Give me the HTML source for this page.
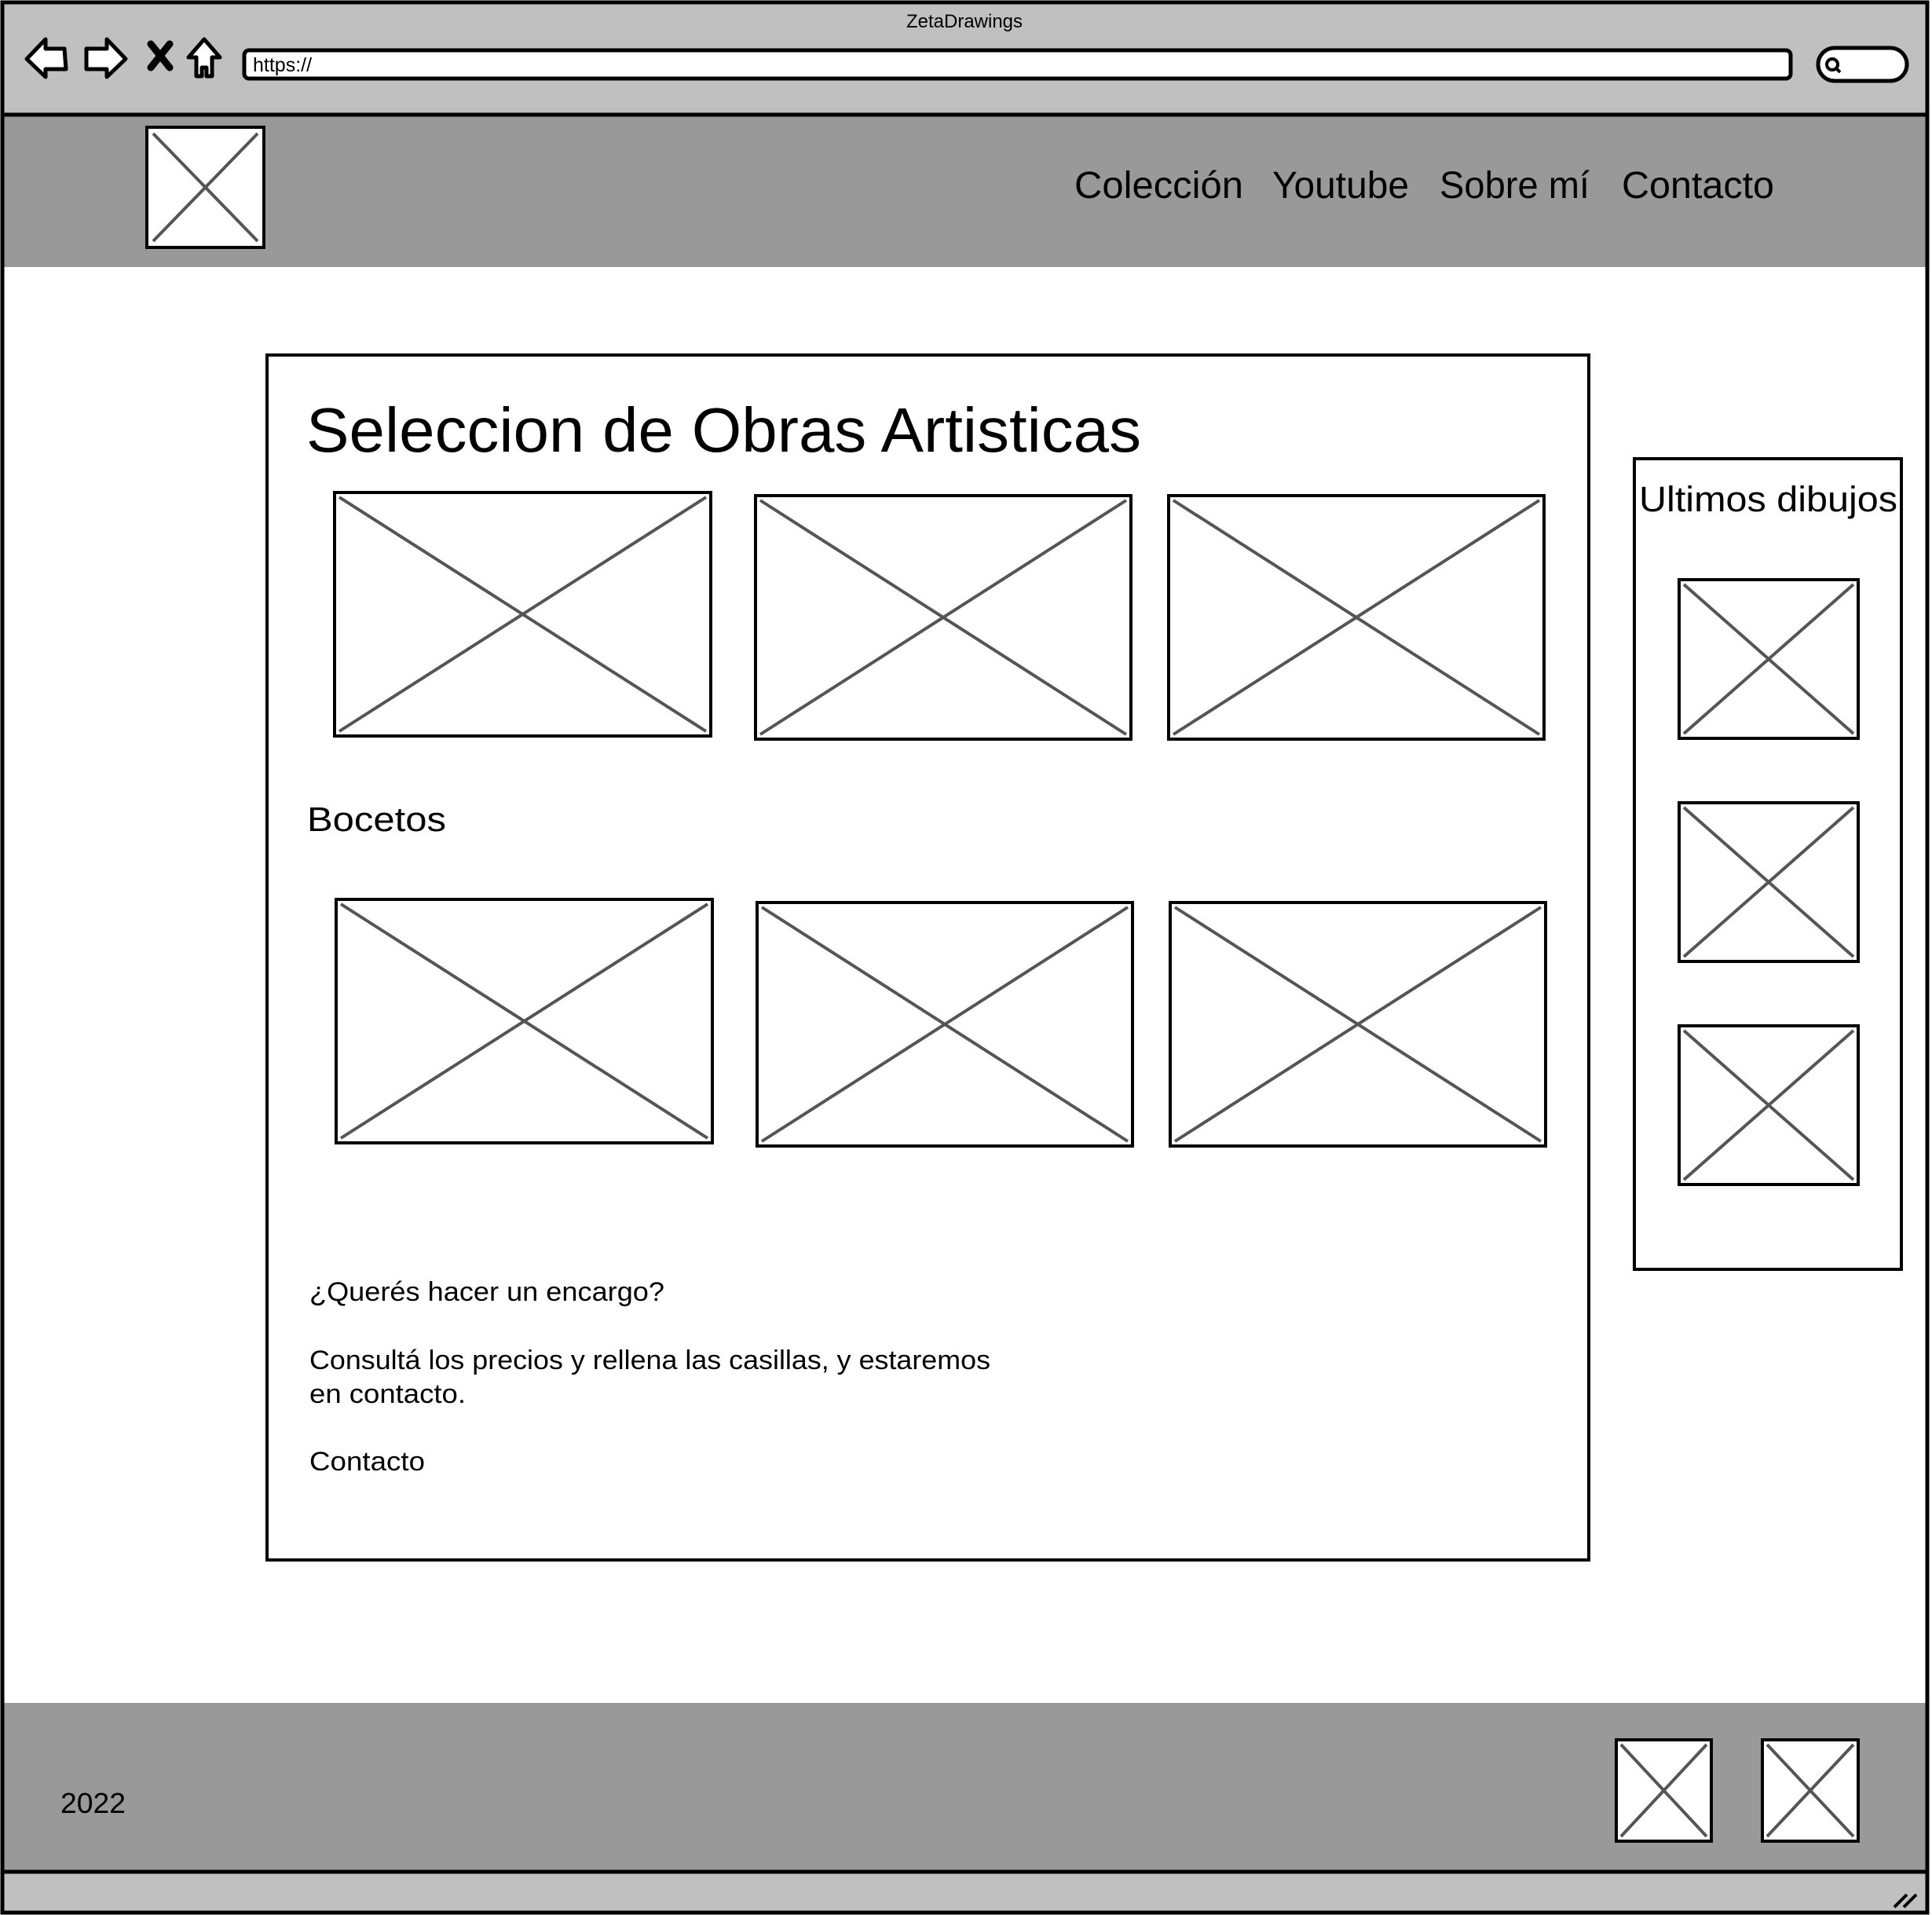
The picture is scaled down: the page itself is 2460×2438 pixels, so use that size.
<!DOCTYPE html>
<html><head><meta charset="utf-8"><style>
html,body{margin:0;padding:0;background:#fff;}
svg{display:block;}
text{font-family:"Liberation Sans",sans-serif;fill:#000;}
</style></head><body>
<svg width="2460" height="2438" viewBox="0 0 2460 2438" xmlns="http://www.w3.org/2000/svg">
<rect x="0" y="0" width="2460" height="2438" fill="#fff"/>
<rect x="4" y="4" width="2450" height="142" fill="#c0c0c0"/>
<text x="1228" y="35" font-size="24" text-anchor="middle">ZetaDrawings</text>
<path d="M34,75 L58,50 L58,62 L82,62 L84,88 L58,88 L58,98 Z" fill="#fff" stroke="#000" stroke-width="5" stroke-linejoin="round"/>
<path d="M160,75 L136,50 L136,62 L110,62 L110,88 L136,88 L136,98 Z" fill="#fff" stroke="#000" stroke-width="5" stroke-linejoin="round"/>
<path d="M192,56 L216,86 M216,56 L192,86" stroke="#000" stroke-width="9" stroke-linecap="round"/>
<path d="M260,50 L280,73 L270,73 L270,97 L263,97 L263,86 L257,86 L257,97 L250,97 L250,73 L240,73 Z" fill="#fff" stroke="#000" stroke-width="5" stroke-linejoin="round"/>
<rect x="311" y="64" width="1969" height="36" rx="6" fill="#fff" stroke="#000" stroke-width="5"/>
<text x="322" y="91" font-size="25">https://</text>
<rect x="2315" y="61" width="113" height="42" rx="21" fill="#fff" stroke="#000" stroke-width="5"/>
<circle cx="2333" cy="82" r="7" fill="none" stroke="#000" stroke-width="4"/>
<line x1="2338" y1="87" x2="2343" y2="92" stroke="#000" stroke-width="4"/>
<rect x="4" y="146" width="2450" height="194" fill="#999"/>
<line x1="4" y1="146" x2="2454" y2="146" stroke="#000" stroke-width="5"/>
<rect x="187" y="162" width="149" height="153" fill="#fff" stroke="#000" stroke-width="4"/>
<path d="M195,170 L328,307 M328,170 L195,307" stroke="#555" stroke-width="4"/>
<text x="1368" y="252" font-size="48" textLength="215" lengthAdjust="spacingAndGlyphs">Colección</text>
<text x="1620" y="252" font-size="48" textLength="174" lengthAdjust="spacingAndGlyphs">Youtube</text>
<text x="1833" y="252" font-size="48" textLength="191" lengthAdjust="spacingAndGlyphs">Sobre mí</text>
<text x="2065" y="252" font-size="48" textLength="194" lengthAdjust="spacingAndGlyphs">Contacto</text>
<rect x="340" y="452" width="1683" height="1534" fill="none" stroke="#000" stroke-width="4"/>
<text x="390" y="575" font-size="80" textLength="1063" lengthAdjust="spacingAndGlyphs">Seleccion de Obras Artisticas</text>
<g stroke-width="4">
<rect x="426" y="627" width="479" height="310" fill="#fff" stroke="#000"/>
<path d="M432,633 L899,931 M899,633 L432,931" stroke="#555"/>
<rect x="962" y="631" width="478" height="310" fill="#fff" stroke="#000"/>
<path d="M968,637 L1434,935 M1434,637 L968,935" stroke="#555"/>
<rect x="1488" y="631" width="478" height="310" fill="#fff" stroke="#000"/>
<path d="M1494,637 L1960,935 M1960,637 L1494,935" stroke="#555"/>
<rect x="428" y="1145" width="479" height="310" fill="#fff" stroke="#000"/>
<path d="M434,1151 L901,1449 M901,1151 L434,1449" stroke="#555"/>
<rect x="964" y="1149" width="478" height="310" fill="#fff" stroke="#000"/>
<path d="M970,1155 L1436,1453 M1436,1155 L970,1453" stroke="#555"/>
<rect x="1490" y="1149" width="478" height="310" fill="#fff" stroke="#000"/>
<path d="M1496,1155 L1962,1453 M1962,1155 L1496,1453" stroke="#555"/>
</g>
<text x="391" y="1058" font-size="44" textLength="177" lengthAdjust="spacingAndGlyphs">Bocetos</text>
<text x="394" y="1656" font-size="34" textLength="452" lengthAdjust="spacingAndGlyphs">¿Querés hacer un encargo?</text>
<text x="394" y="1743" font-size="34" textLength="867" lengthAdjust="spacingAndGlyphs">Consultá los precios y rellena las casillas, y estaremos</text>
<text x="394" y="1786" font-size="34" textLength="199" lengthAdjust="spacingAndGlyphs">en contacto.</text>
<text x="394" y="1872" font-size="34" textLength="147" lengthAdjust="spacingAndGlyphs">Contacto</text>
<rect x="2081" y="584" width="340" height="1032" fill="none" stroke="#000" stroke-width="4"/>
<text x="2087" y="651" font-size="45" textLength="329" lengthAdjust="spacingAndGlyphs">Ultimos dibujos</text>
<g stroke-width="4">
<rect x="2138" y="738" width="228" height="202" fill="#fff" stroke="#000"/>
<path d="M2144,744 L2360,934 M2360,744 L2144,934" stroke="#555"/>
<rect x="2138" y="1022" width="228" height="202" fill="#fff" stroke="#000"/>
<path d="M2144,1028 L2360,1218 M2360,1028 L2144,1218" stroke="#555"/>
<rect x="2138" y="1306" width="228" height="202" fill="#fff" stroke="#000"/>
<path d="M2144,1312 L2360,1502 M2360,1312 L2144,1502" stroke="#555"/>
</g>
<rect x="4" y="2168" width="2450" height="214" fill="#999"/>
<text x="77" y="2308" font-size="36" textLength="83" lengthAdjust="spacingAndGlyphs">2022</text>
<g stroke-width="4">
<rect x="2058" y="2215" width="121" height="129" fill="#fff" stroke="#000"/>
<path d="M2064,2221 L2173,2338 M2173,2221 L2064,2338" stroke="#555"/>
<rect x="2244" y="2215" width="122" height="129" fill="#fff" stroke="#000"/>
<path d="M2250,2221 L2360,2338 M2360,2221 L2250,2338" stroke="#555"/>
</g>
<rect x="4" y="2384" width="2450" height="50" fill="#c0c0c0"/>
<line x1="4" y1="2383" x2="2454" y2="2383" stroke="#000" stroke-width="5"/>
<path d="M2412,2428 L2428,2412 M2424,2428 L2440,2412" stroke="#000" stroke-width="4"/>
<rect x="3" y="3" width="2451" height="2432" fill="none" stroke="#000" stroke-width="5"/>
</svg>
</body></html>
